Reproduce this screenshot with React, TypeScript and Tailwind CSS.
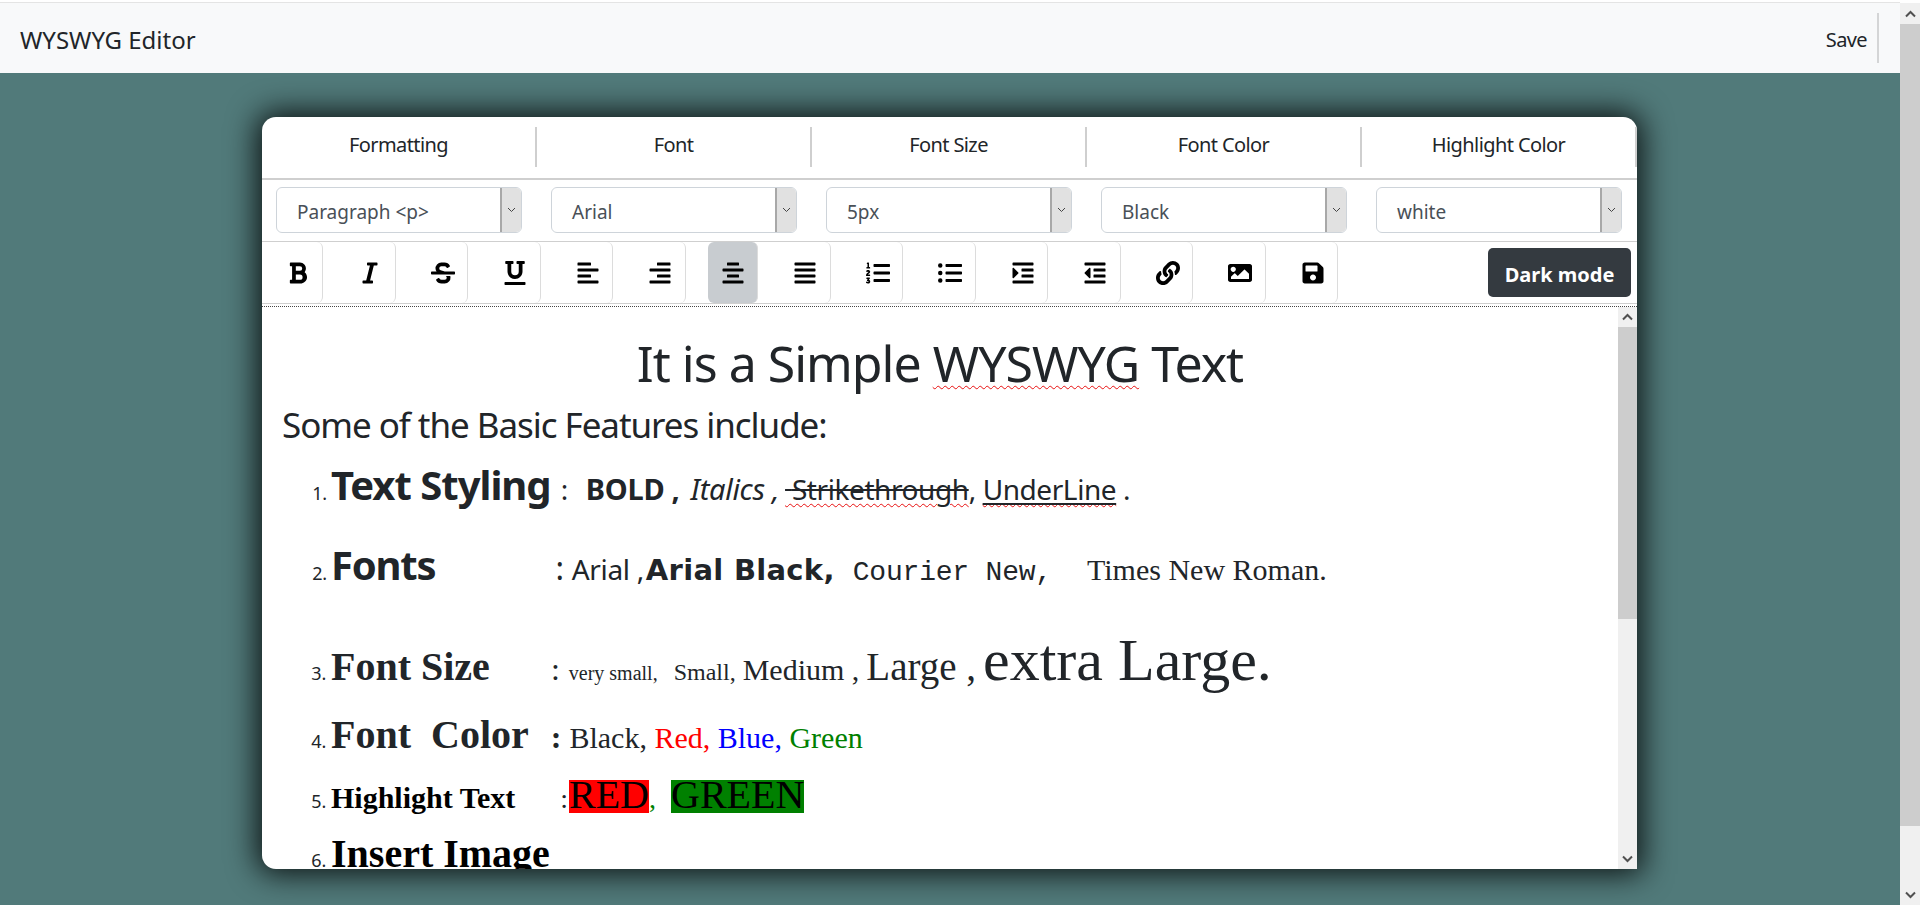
import React from "react";
import {
  FaBold, FaItalic, FaStrikethrough, FaUnderline, FaAlignLeft, FaAlignRight, FaAlignCenter, FaAlignJustify,
  FaListOl, FaListUl, FaIndent, FaOutdent, FaLink, FaImage, FaSave,
} from "react-icons/fa";

const Chevron = ({ up = false }: { up?: boolean }) => (
  <svg width="11" height="8" viewBox="0 0 11 8" fill="none">
    <path d={up ? "M1 6.5 L5.5 2 L10 6.5" : "M1 1.5 L5.5 6 L10 1.5"} stroke="#505050" strokeWidth="2" />
  </svg>
);

const Select = ({ label }: { label: string }) => (
  <div className="flex h-[46px] w-[246px] items-stretch rounded-[6px] border border-[#ced4da] bg-white text-[19px] text-[#495057]">
    <div className="flex flex-1 items-center pl-[20px] pt-[5px]">{label}</div>
    <div className="flex w-[21px] items-center justify-center rounded-r-[5px] border-l-2 border-[#a8a8a8] bg-[#e1e1e1]">
      <svg width="9" height="6" viewBox="0 0 9 6" fill="none">
        <path d="M1 1 L4.5 4.5 L8 1" stroke="#444" strokeWidth="1" />
      </svg>
    </div>
  </div>
);

const icons = [
  FaBold, FaItalic, FaStrikethrough, FaUnderline, FaAlignLeft, FaAlignRight, FaAlignCenter, FaAlignJustify,
  FaListOl, FaListUl, FaIndent, FaOutdent, FaLink, FaImage, FaSave,
];

const Sq = ({ children }: { children: React.ReactNode }) => (
  <span className="underline decoration-wavy decoration-[#e81010] decoration-1 underline-offset-[3px]">{children}</span>
);

export default function App() {
  return (
    <div className="flex h-[905px] w-[1920px] overflow-hidden bg-white font-['Noto_Sans',sans-serif] text-[#212529]">
      <div className="flex w-[1900px] flex-col">
        <div className="mt-[2px] h-px bg-[#e4e4e4]" />
        <header className="flex h-[70px] items-center justify-between bg-[#f8f9fa] pl-[20px] pr-[21px]">
          <div className="pt-[4px] text-[24px] leading-none">WYSWYG Editor</div>
          <div className="flex h-[50px] items-center">
            <span className="pt-[4px] text-[20px] tracking-[-0.03em]">Save</span>
            <span className="ml-[10px] h-[50px] w-[2px] bg-[#d4d5d6]" />
          </div>
        </header>
        <main className="flex-1 bg-[#517a7a] pl-[262px] pt-[44px]">
          <div className="flex h-[752px] w-[1375px] flex-col overflow-hidden rounded-t-[14px] rounded-bl-[14px] bg-white shadow-[0_0_30px_5px_rgba(0,0,0,0.85)]">
            <div className="flex h-[63px] shrink-0 items-center border-b-2 border-[#cfcfcf] pb-[2px]">
              {["Formatting", "Font", "Font Size", "Font Color", "Highlight Color"].map((t) => (
                <div key={t} className="flex h-[40px] w-[275px] items-center justify-center border-r-2 border-[#cfcfcf] pb-[3px] text-[20px] tracking-[-0.03em]">
                  {t}
                </div>
              ))}
            </div>
            <div className="flex h-[61px] shrink-0 items-start gap-[29px] pl-[14px] pt-[7px]">
              <Select label="Paragraph <p>" />
              <Select label="Arial" />
              <Select label="5px" />
              <Select label="Black" />
              <Select label="white" />
            </div>
            <div className="flex h-[63px] shrink-0 items-stretch border-y border-[#cfcfcf] pl-[11px]">
              {icons.map((I, i) => (
                <button
                  key={i}
                  className={`flex w-[50px] items-center justify-center rounded-r-[6px] border-r border-[#dcdcdc] text-[24px] text-black ${i === 0 ? "" : "ml-[22.5px]"} ${i === 6 ? "rounded-l-[6px] bg-[#c8ccd0]" : ""}`}
                >
                  <I />
                </button>
              ))}
              <div className="flex-1" />
              <div className="mr-[6px] flex items-center">
                <button className="h-[49px] w-[143px] rounded-[5px] bg-[#343a40] pt-[5px] text-[20px] font-bold text-white">Dark mode</button>
              </div>
            </div>
            <div className="mt-[1px] h-[2px] shrink-0 border-b border-dotted border-[#444]" />
            <div className="flex min-h-0 flex-1">
              <div className="min-w-0 flex-1 overflow-hidden pl-[20px]">
                <h1 className="mt-[28px] h-[56px] pr-[20px] text-center text-[50px] leading-[56px] tracking-[-0.02em]">
                  It is a Simple <Sq>WYSWYG</Sq> Text
                </h1>
                <p className="mt-[12px] h-[44px] text-[35px] leading-[44px] tracking-[-0.03em]">Some of the Basic Features include:</p>
                <ol className="list-decimal pl-[49px] text-[16px] tracking-[-0.02em] marker:font-['Noto_Sans',sans-serif] marker:text-[18px]">
                  <li className="mt-[10px] h-[60px] leading-[56px]">
                    <b className="text-[40px] font-bold leading-[56px] tracking-[-0.025em]">Text Styling</b>
                    <span className="ml-[10px] text-[28px] leading-[56px]">:</span>
                    <b className="ml-[18px] text-[29px] font-bold leading-[56px] tracking-[-0.01em]">BOLD ,</b>
                    <i className="ml-[11px] text-[29px] leading-[56px] tracking-[-0.01em]">Italics ,</i>
                    <span className="ml-[6px] text-[28px] leading-[56px] tracking-[-0.015em]"><Sq><span className="line-through decoration-solid decoration-[#212529]">{" "}Strikethrough</span></Sq>, <Sq><span className="underline decoration-solid decoration-[#212529] underline-offset-[3px]">UnderLine</span></Sq> .</span>
                  </li>
                  <li className="mt-[20px] h-[74px] leading-[56px]">
                    <b className="text-[40px] font-bold leading-[56px] tracking-[-0.03em]">Fonts</b>
                    <span className="ml-[120px] text-[32px] leading-[56px]">:</span>
                    <span className="ml-[8px] text-[28px] leading-[56px]">Arial ,</span>
                    <span className="ml-[2px] font-['DejaVu_Sans',sans-serif] text-[29px] font-bold leading-[56px] tracking-[0.01em]">Arial Black,</span>
                    <span className="ml-[18px] font-['Liberation_Mono',monospace] text-[28px] leading-[56px] tracking-[-0.2px]">Courier New,</span>
                    <span className="ml-[35px] font-['Liberation_Serif',serif] text-[30px] leading-[56px] tracking-normal">Times New Roman.</span>
                  </li>
                  <li className="mt-[17px] h-[77px] font-['Liberation_Serif',serif] leading-[64px] tracking-normal">
                    <b className="text-[40px] leading-[64px]">Font Size</b>
                    <span className="ml-[61px] text-[32px] leading-[64px]">:</span>
                    <span className="ml-[9px] text-[20px] leading-[64px]">very small,</span>
                    <span className="ml-[16px] text-[24px] leading-[64px]">Small,</span>
                    <span className="ml-[7px] text-[30px] leading-[64px]">Medium ,</span>
                    <span className="ml-[7px] text-[39px] leading-[64px]">Large ,</span>
                    <span className="ml-[7px] text-[60px] leading-[64px]">extra Large.</span>
                  </li>
                  <li className="h-[63px] font-['Liberation_Serif',serif] leading-[60px] tracking-normal">
                    <b className="whitespace-pre text-[40px] leading-[60px]">Font  Color</b>
                    <b className="ml-[22px] text-[32px] leading-[60px]">:</b>
                    <span className="ml-[8px] text-[30px] leading-[60px]">Black, <span className="text-[#ff0000]">Red,</span> <span className="text-[#0000ff]">Blue,</span> <span className="text-[#008000]">Green</span></span>
                  </li>
                  <li className="h-[58px] font-['Liberation_Serif',serif] leading-[60px] tracking-normal">
                    <b className="text-[30px] text-black leading-[60px]">Highlight Text</b>
                    <span className="ml-[45px] text-[28px] leading-[60px]">:</span>
                    <span className="ml-[1px] inline-block h-[33px] bg-[#ff0000] align-baseline text-[40px] leading-[30px] text-black">RED</span>
                    <span className="text-[28px] text-[#008000] leading-[60px]">,</span>
                    <span className="ml-[15px] inline-block h-[33px] bg-[#008000] text-[40px] leading-[30px] text-black">GREEN</span>
                  </li>
                  <li className="font-['Liberation_Serif',serif] leading-[56px] tracking-normal">
                    <b className="text-[40px] text-black leading-[56px]">Insert Image</b>
                  </li>
                </ol>
              </div>
              <div className="flex w-[19px] shrink-0 flex-col bg-[#f0f0f0]">
                <div className="flex h-[20px] items-center justify-center"><Chevron up /></div>
                <div className="h-[292px] bg-[#cdcdcd]" />
                <div className="flex-1" />
                <div className="flex h-[20px] items-center justify-center"><Chevron /></div>
              </div>
            </div>
          </div>
        </main>
      </div>
      <div className="mt-[3px] flex w-[20px] shrink-0 flex-col bg-[#f0f0f0]">
        <div className="flex h-[21px] items-center justify-center"><Chevron up /></div>
        <div className="h-[802px] bg-[#cdcdcd]" />
        <div className="flex-1" />
        <div className="flex h-[21px] items-center justify-center"><Chevron /></div>
      </div>
    </div>
  );
}
